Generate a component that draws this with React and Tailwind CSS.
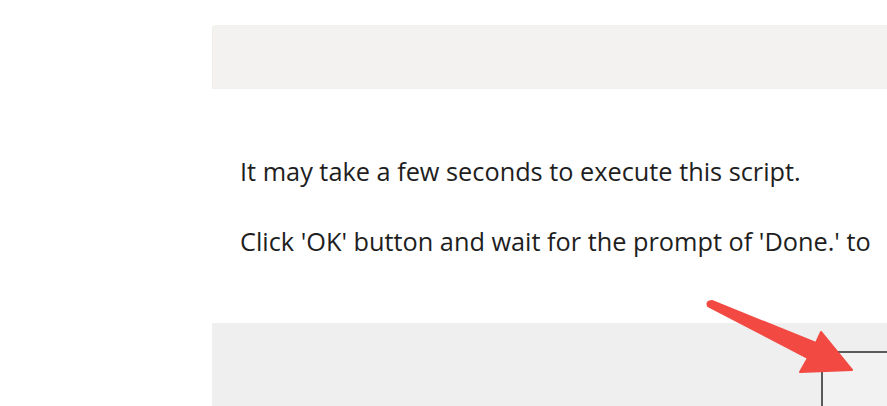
export default function App() {
  return (
    <div className="relative h-[406px] w-[887px] overflow-hidden bg-white pl-[212px] pt-[25px]" style={{ fontFamily: '"Open Sans", "Noto Sans", sans-serif' }}>
      <div className="flex h-full flex-col">
        <div className="h-[64px] shrink-0 rounded-tl-[4px] border-l border-t border-l-[#efede9] border-t-[#f1efec] bg-[#f3f2f0]" />
        <div className="h-[234px] shrink-0 bg-white pl-[28px] pt-[66px] text-[25.3px] leading-[32px] text-[#1e1e1e]">
          <p className="whitespace-nowrap">It may take a few seconds to execute this script.</p>
          <p className="mt-[38px] whitespace-nowrap">Click 'OK' button and wait for the prompt of 'Done.' to</p>
        </div>
        <div className="flex-1 bg-[#efefef] pl-[609px] pt-[28px]">
          <div className="h-[80px] w-[120px] border-2 border-[#5a5a5a] bg-[#f2f2f2]" />
        </div>
      </div>
      <svg className="absolute left-0 top-0" width="887" height="406" viewBox="0 0 887 406">
        <path d="M708 306 Q706 301 712 301 L816 343 L821 332 L852 370 L800 372 L808 358 L708 306 Z" fill="#f24a43" stroke="#f24a43" strokeWidth="2" strokeLinejoin="round" />
      </svg>
    </div>
  );
}
